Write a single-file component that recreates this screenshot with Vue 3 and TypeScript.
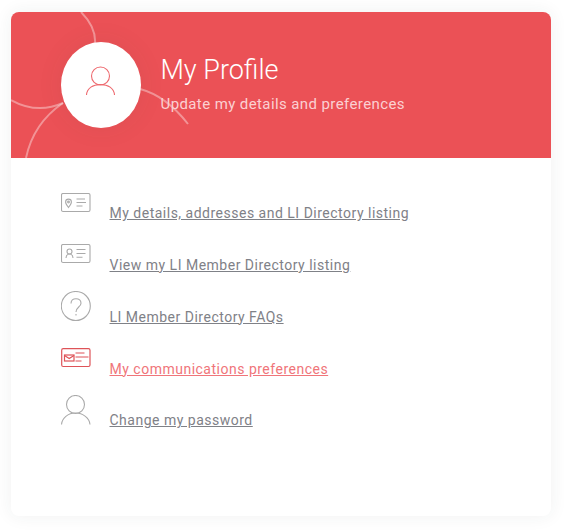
<script setup lang="ts">
interface Row { label: string; icon: string; active?: boolean }
const rows: Row[] = [
  { label: 'My details, addresses and LI Directory listing', icon: 'pin' },
  { label: 'View my LI Member Directory listing', icon: 'card' },
  { label: 'LI Member Directory FAQs', icon: 'help' },
  { label: 'My communications preferences', icon: 'mail', active: true },
  { label: 'Change my password', icon: 'user' },
]
</script>

<template>
  <main class="page">
    <section class="card">
      <header class="head">
        <svg class="arcs" width="540" height="146" viewBox="0 0 540 146" fill="none">
          <path d="M70 0C79 9 85 20 84 32" />
          <path d="M0 88C18 98 36 98 52 91" />
          <path d="M15 146C20 122 33 104 52 91" />
          <path d="M129 77C148 82 163 94 177 112" />
        </svg>
        <div class="avatar">
          <svg width="32" height="32" viewBox="0 0 32 32" fill="none">
            <circle cx="15.5" cy="10" r="9" />
            <path d="M1.5 29C2 22 8 18.500 15.500 18.500S29 22 29.500 29" />
          </svg>
        </div>
        <div class="titles">
          <h1>My Profile</h1>
          <p>Update my details and preferences</p>
        </div>
      </header>
      <ul class="list">
        <li v-for="row in rows" :key="row.label" class="row" :class="{ active: row.active }">
          <span class="icon">
            <svg v-if="row.icon === 'pin'" width="30" height="20" viewBox="0 0 30 20" fill="none">
              <rect x=".5" y=".5" width="28.500" height="18" rx="1.500" />
              <path d="M7.500 14.500C5.500 12 4.600 10.500 4.600 9a2.900 2.900 0 0 1 5.800 0c0 1.500-.9 3-2.900 5.500Z" />
              <circle cx="7.500" cy="9" r=".9" />
              <path d="M15.500 6h8.500M15.500 9.500h9.500M15.500 13h6" />
            </svg>
            <svg v-else-if="row.icon === 'card'" width="30" height="20" viewBox="0 0 30 20" fill="none">
              <rect x=".5" y=".5" width="28.500" height="18" rx="1.500" />
              <circle cx="8.500" cy="7.500" r="2.500" />
              <path d="M5 14c.2-2.500 1.500-4 3.500-4s3.300 1.500 3.500 4" />
              <path d="M15.500 5.500h9M15.500 9.500h9M15.500 13.200h6" />
            </svg>
            <svg v-else-if="row.icon === 'help'" width="30" height="31" viewBox="0 0 30 31" fill="none">
              <circle cx="14.800" cy="15" r="14.500" />
              <path d="M10 12.500c0-3 2-4.800 5-4.800s5 2 5 4.500c0 3.800-5 4-5 8.800" />
              <path d="M15 23v1.500" />
            </svg>
            <svg v-else-if="row.icon === 'mail'" width="30" height="20" viewBox="0 0 30 20" fill="none">
              <rect x=".7" y=".7" width="28.300" height="17.800" rx="1.500" />
              <rect x="3.500" y="7" width="9.500" height="6" />
              <path d="M3.500 7.500 8.200 10.500l4.800-3" />
              <path d="M14.500 5h9M14.500 9h13M14.500 13h6" />
            </svg>
            <svg v-else width="30" height="30" viewBox="0 0 30 30" fill="none">
              <circle cx="14.500" cy="9.500" r="9" />
              <path d="M.5 29.500C1 23 7 18 14.500 18S28.500 23 29 29.500" />
            </svg>
          </span>
          <a href="#" class="link" @click.prevent>{{ row.label }}</a>
        </li>
      </ul>
    </section>
  </main>
</template>

<style>
html, body { margin: 0; background: #fff; }
</style>

<style scoped>
.page {
  height: 531px;
  box-sizing: border-box;
  padding: 12px 13px 15px 11px;
  font-family: Roboto, sans-serif;
  overflow: hidden;
}
.card {
  height: 504px;
  background: #fff;
  border-radius: 8px;
  overflow: hidden;
  box-shadow: 0 0 18px rgba(40, 50, 50, 0.07);
}
.head {
  position: relative;
  height: 146px;
  box-sizing: border-box;
  padding: 30px 0 0 50px;
  display: flex;
  align-items: flex-start;
  gap: 19.5px;
  background: #eb5156;
  overflow: hidden;
}
.arcs { position: absolute; left: 0; top: 0; }
.arcs path { stroke: #fff; stroke-opacity: .38; stroke-width: 2; }
.avatar {
  position: relative;
  width: 80px;
  height: 86px;
  flex: none;
  display: flex;
  align-items: center;
  justify-content: center;
  border-radius: 50%;
  background: #fff;
  box-shadow: 0 0 28px rgba(70, 70, 70, .07);
}
.avatar svg { margin-bottom: 6px; stroke: #ee6a6f; stroke-width: 1.1; }
.titles { position: relative; padding-top: 10px; }
h1 {
  margin: 0;
  color: #fff;
  font-size: 27px;
  line-height: 36px;
  font-weight: 300;
}
p {
  margin: 6px 0 0;
  color: #fbd0d2;
  font-size: 15px;
  line-height: 20px;
  letter-spacing: .4px;
}
.list {
  list-style: none;
  margin: 0;
  padding: 29px 0 0 50px;
  display: flex;
  flex-direction: column;
}
.row {
  height: 51.85px;
  display: flex;
  align-items: flex-start;
}
.icon {
  width: 48.5px;
  height: 31px;
  flex: none;
  display: flex;
  align-items: center;
}
.icon svg { display: block; stroke: #aaaaaa; stroke-width: 1.1; }
.link {
  margin-top: 18px;
  color: #7f8187;
  font-size: 14px;
  line-height: 16px;
  letter-spacing: .5px;
}
.active .icon svg { stroke: #de5358; stroke-width: 1.2; }
.active .link { color: #f0757a; }
</style>
